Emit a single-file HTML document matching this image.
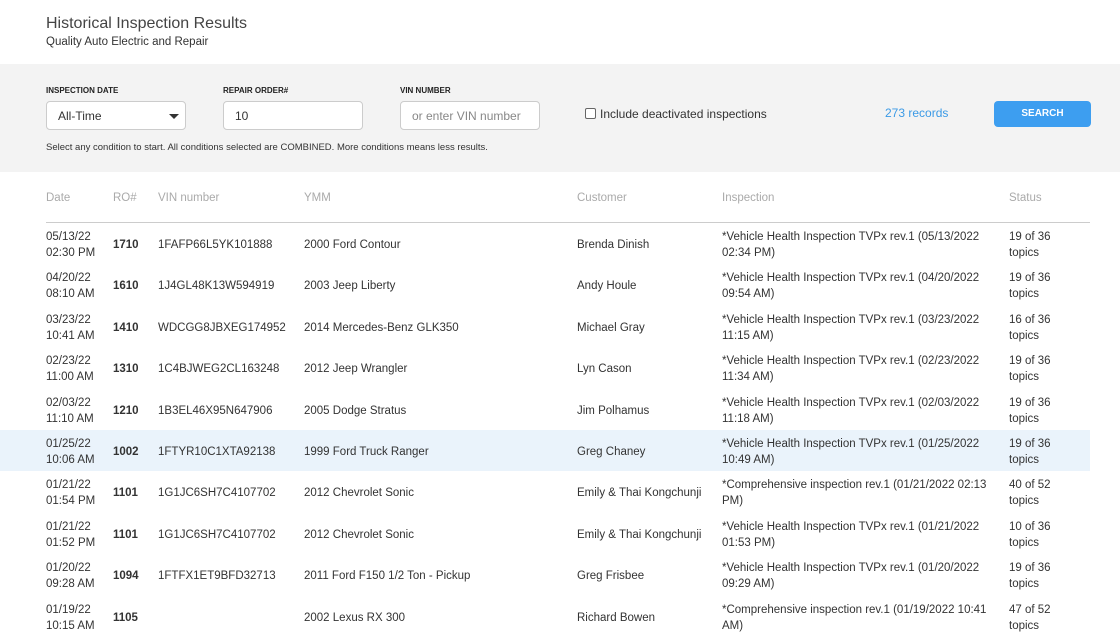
<!DOCTYPE html>
<html><head><style>
body{margin:0;width:1120px;height:635px;overflow:hidden;background:#fff;font-family:"Liberation Sans",sans-serif;color:#333;position:relative}
.a{position:absolute;white-space:nowrap}
h1{position:absolute;left:46px;top:15px;margin:0;font-weight:normal;font-size:16px;color:#444}
.sub{left:46px;top:36px;font-size:11.5px;color:#333}
.panel{position:absolute;left:0;top:64px;width:1120px;height:108px;background:#f3f3f3}
.lbl{font-size:8px;font-weight:bold;color:#222;top:86px}
.inp{position:absolute;top:101px;height:29px;background:#fff;border:1px solid #ccc;border-radius:4px;box-sizing:border-box;font-size:12px;line-height:29px;padding-left:11px}
.hd{top:192px;font-size:11.5px;color:#aaa}
.row{position:absolute;left:0;width:1090px;height:41px;font-size:11.5px;color:#333}
.row .a{line-height:16px}
.hl{background:#eaf3fb}
</style></head><body>
<h1>Historical Inspection Results</h1>
<div class="a sub">Quality Auto Electric and Repair</div>
<div class="panel"></div>
<div class="a lbl" style="left:46px">INSPECTION DATE</div>
<div class="a lbl" style="left:223px">REPAIR ORDER#</div>
<div class="a lbl" style="left:400px">VIN NUMBER</div>
<div class="inp" style="left:46px;width:140px">All-Time<span style="position:absolute;right:6px;top:12px;border-left:5px solid transparent;border-right:5px solid transparent;border-top:5px solid #333"></span></div>
<div class="inp" style="left:223px;width:140px">10</div>
<div class="inp" style="left:400px;width:140px;color:#888">or enter VIN number</div>
<div class="a" style="left:46px;top:142px;font-size:9.5px;color:#333">Select any condition to start. All conditions selected are COMBINED. More conditions means less results.</div>
<div class="a" style="left:585px;top:108px;width:9px;height:9px;border:1px solid #666;border-radius:2px;background:#fff"></div>
<div class="a" style="left:600px;top:107px;font-size:12px;color:#333">Include deactivated inspections</div>
<div class="a" style="left:885px;top:106px;font-size:12px;color:#3b9ae6">273 records</div>
<div class="a" style="left:994px;top:101px;width:97px;height:26px;background:#3d9ef0;border-radius:4px;color:#fff;font-size:10px;font-weight:bold;text-align:center;line-height:26px">SEARCH</div>
<div class="a hd" style="left:46px">Date</div>
<div class="a hd" style="left:113px">RO#</div>
<div class="a hd" style="left:158px">VIN number</div>
<div class="a hd" style="left:304px">YMM</div>
<div class="a hd" style="left:577px">Customer</div>
<div class="a hd" style="left:722px">Inspection</div>
<div class="a hd" style="left:1009px">Status</div>
<div class="a" style="left:46px;top:222px;width:1044px;height:1px;background:#ccc"></div>
<div id="rows"></div>
<script>
var d=[
["05/13/22","02:30 PM","1710","1FAFP66L5YK101888","2000 Ford Contour","Brenda Dinish","*Vehicle Health Inspection TVPx rev.1 (05/13/2022","02:34 PM)","19 of 36"],
["04/20/22","08:10 AM","1610","1J4GL48K13W594919","2003 Jeep Liberty","Andy Houle","*Vehicle Health Inspection TVPx rev.1 (04/20/2022","09:54 AM)","19 of 36"],
["03/23/22","10:41 AM","1410","WDCGG8JBXEG174952","2014 Mercedes-Benz GLK350","Michael Gray","*Vehicle Health Inspection TVPx rev.1 (03/23/2022","11:15 AM)","16 of 36"],
["02/23/22","11:00 AM","1310","1C4BJWEG2CL163248","2012 Jeep Wrangler","Lyn Cason","*Vehicle Health Inspection TVPx rev.1 (02/23/2022","11:34 AM)","19 of 36"],
["02/03/22","11:10 AM","1210","1B3EL46X95N647906","2005 Dodge Stratus","Jim Polhamus","*Vehicle Health Inspection TVPx rev.1 (02/03/2022","11:18 AM)","19 of 36"],
["01/25/22","10:06 AM","1002","1FTYR10C1XTA92138","1999 Ford Truck Ranger","Greg Chaney","*Vehicle Health Inspection TVPx rev.1 (01/25/2022","10:49 AM)","19 of 36"],
["01/21/22","01:54 PM","1101","1G1JC6SH7C4107702","2012 Chevrolet Sonic","Emily &amp; Thai Kongchunji","*Comprehensive inspection rev.1 (01/21/2022 02:13","PM)","40 of 52"],
["01/21/22","01:52 PM","1101","1G1JC6SH7C4107702","2012 Chevrolet Sonic","Emily &amp; Thai Kongchunji","*Vehicle Health Inspection TVPx rev.1 (01/21/2022","01:53 PM)","10 of 36"],
["01/20/22","09:28 AM","1094","1FTFX1ET9BFD32713","2011 Ford F150 1/2 Ton - Pickup","Greg Frisbee","*Vehicle Health Inspection TVPx rev.1 (01/20/2022","09:29 AM)","19 of 36"],
["01/19/22","10:15 AM","1105","","2002 Lexus RX 300","Richard Bowen","*Comprehensive inspection rev.1 (01/19/2022 10:41","AM)","47 of 52"]];
var h="";
d.forEach(function(r,i){var t=223+i*41.4;
h+='<div class="row'+(i==5?' hl':'')+'" style="top:'+t+'px">'+
'<div class="a" style="left:46px;top:6px">'+r[0]+'<br>'+r[1]+'</div>'+
'<div class="a" style="left:113px;top:14px;font-weight:bold">'+r[2]+'</div>'+
'<div class="a" style="left:158px;top:14px">'+r[3]+'</div>'+
'<div class="a" style="left:304px;top:14px">'+r[4]+'</div>'+
'<div class="a" style="left:577px;top:14px">'+r[5]+'</div>'+
'<div class="a" style="left:722px;top:6px">'+r[6]+'<br>'+r[7]+'</div>'+
'<div class="a" style="left:1009px;top:6px">'+r[8]+'<br>topics</div></div>';});
document.getElementById("rows").innerHTML=h;
</script>
</body></html>
